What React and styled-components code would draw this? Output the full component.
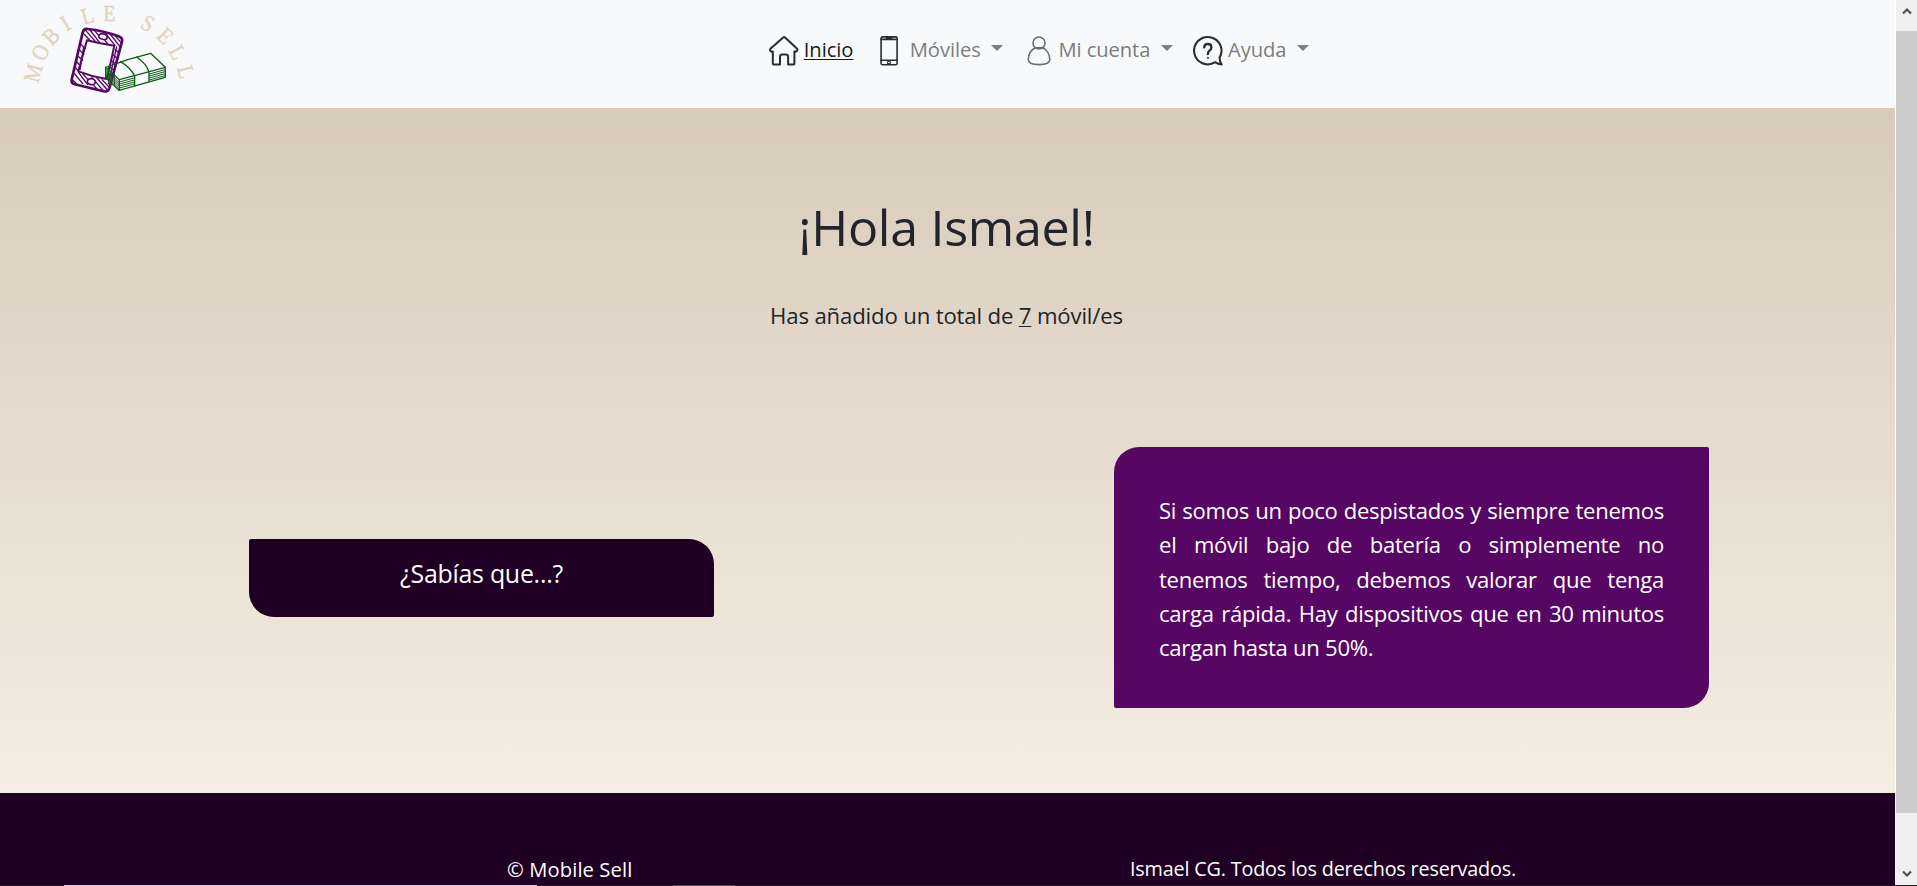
import React from "react";
import styled, { createGlobalStyle } from "styled-components";

const GlobalStyle = createGlobalStyle`
  *, *::before, *::after { box-sizing: border-box; }
  html, body { margin: 0; padding: 0; overflow: hidden; }
  body { font-family: "Open Sans", "Noto Sans", sans-serif; color: #212529; background: #fff; }
  h1, p { margin: 0; font-weight: 400; }
`;

const Screen = styled.div`
  display: flex;
  flex-direction: column;
  width: 1917px;
  height: 886px;
  overflow: hidden;
`;

const Viewport = styled.div`
  display: flex;
  flex: 0 0 885px;
`;

const Page = styled.div`
  display: flex;
  flex-direction: column;
  width: 1895px;
  height: 885px;
`;

const Header = styled.header`
  display: flex;
  flex: 0 0 108px;
  background: #f8f9fb;
`;

const LogoSvg = styled.svg`
  display: block;
  width: 220px;
  height: 108px;
  flex: none;
`;

const Nav = styled.nav`
  display: flex;
  align-items: flex-start;
  gap: 20.4px;
  margin-left: 549px;
  padding-top: 34px;
`;

const NavItem = styled.a`
  display: flex;
  align-items: center;
  height: 30px;
  font-size: 20.2px;
  line-height: 30px;
  letter-spacing: -0.08px;
  color: ${(p) => (p.$active ? "#191a1b" : "#7c7d7e")};
`;

const NavIcon = styled.svg`
  display: block;
  flex: none;
  width: 30px;
  height: 30px;
  margin: 3px ${(p) => p.$space || 4.8}px 0 0;
  overflow: visible;
  fill: none;
  stroke: ${(p) => p.$tone || "#2b2c2d"};
  stroke-width: ${(p) => p.$weight || 2};
  stroke-linejoin: round;
  stroke-linecap: round;
`;

const NavLabel = styled.span`
  text-decoration: ${(p) => (p.$active ? "underline" : "none")};
  text-decoration-thickness: 1px;
  text-underline-offset: 2px;
`;

const Caret = styled.span`
  width: 0;
  height: 0;
  margin: -3px 0 0 10.5px;
  border: 6px solid transparent;
  border-top-color: #7c7d7e;
  border-bottom: 0;
`;

const Main = styled.main`
  display: flex;
  flex-direction: column;
  align-items: center;
  flex: 0 0 685px;
  padding-top: 88px;
  background: linear-gradient(#d8cbba, #f5ede3);
`;

const Greeting = styled.h1`
  padding-right: 2px;
  font-size: 50.2px;
  line-height: 62px;
  letter-spacing: -0.32px;
`;

const Summary = styled.p`
  margin-top: 41px;
  padding-right: 2px;
  font-size: 22.2px;
  line-height: 34px;
  letter-spacing: -0.17px;
`;

const Count = styled.span`
  text-decoration: underline;
  text-decoration-thickness: 1px;
  text-underline-offset: 2px;
`;

const TipRow = styled.section`
  display: flex;
  align-items: center;
  justify-content: space-between;
  width: 100%;
  margin-top: 114px;
  padding: 0 186px 0 249px;
`;

const TipButton = styled.div`
  width: 465px;
  height: 78px;
  padding-top: 15px;
  border-radius: 2px 25px 2px 25px;
  background: #1f0024;
  color: #fff;
  font-size: 24.9px;
  line-height: 38px;
  letter-spacing: -0.25px;
  text-align: center;
`;

const TipCard = styled.p`
  width: 595px;
  height: 261px;
  padding: 46px 45px 0;
  border-radius: 25px 2px 25px 2px;
  background: #560663;
  color: #fff;
  font-size: 22.1px;
  line-height: 34.3px;
  letter-spacing: -0.28px;
  text-align: justify;
`;

const Footer = styled.footer`
  display: flex;
  flex: 1;
  padding: 61px 0 0 507px;
  background: #1f0024;
  color: #fff;
  line-height: 30px;
`;

const FooterText = styled.p`
  flex: 0 0 ${(p) => p.$width}px;
  font-size: ${(p) => p.$size}px;
  letter-spacing: ${(p) => p.$spacing}px;
  white-space: nowrap;
`;

const Scrollbar = styled.div`
  display: flex;
  flex-direction: column;
  width: 21px;
  margin-left: 1px;
  background: #f0f0f0;
`;

const ScrollArrow = styled.div`
  display: flex;
  align-items: flex-start;
  justify-content: center;
  height: ${(p) => p.$height}px;
  padding-top: ${(p) => p.$drop}px;
`;

const Thumb = styled.div`
  height: 782px;
  background: #cdcdcd;
`;

const Strip = styled.div`
  display: flex;
  height: 1px;
  background: #1d1b1d;
`;

const StripPart = styled.div`
  width: ${(p) => p.$width}px;
  background: ${(p) => p.$color};
`;

const letters = [
  ["M", 33.2, 73, -75],
  ["O", 40.4, 52.5, -61],
  ["B", 51, 36, -46],
  ["I", 65.5, 23.3, -31],
  ["L", 87.5, 15.8, -15],
  ["E", 109.5, 12.9, 0],
  ["S", 147.8, 23.3, 29],
  ["E", 165.2, 36, 46],
  ["L", 177.7, 52.5, 61],
  ["L", 186, 72, 76],
];

function Logo() {
  return (
    <LogoSvg viewBox="0 0 220 108">
      <g
        fill="#e2d3c2"
        stroke="#e2d3c2"
        strokeWidth=".45"
        fontFamily="Liberation Serif, serif"
        fontSize="23"
        textAnchor="middle"
      >
        {letters.map(([ch, x, y, r], i) => (
          <text key={i} transform={`translate(${x} ${y}) rotate(${r}) scale(.88 1)`} y="7.6">{ch}</text>
        ))}
      </g>
      <g transform="scale(.3333)" fill="none" strokeLinecap="round" strokeLinejoin="round">
        <g stroke="#560663">
          <path strokeWidth="8" d="M263 87Q251 85 248 98L215 239Q213 250 224 253L311 274Q324 277 328 265L366 125Q369 114 356 109Q310 92 263 87Z" />
          <path strokeWidth="6" d="M261 121Q303 132 343 137Q333 187 320 237Q276 230 235 214Z" />
          <path strokeWidth="4" d="M251 101L269 120M257 91L286 124M270 90L299 128M284 92L296 106M313 119L323 132M313 96L345 136M328 99L362 142M345 107L365 130M244 134L255 146M240 151L251 164M236 170L248 181M231 187L242 198M227 204L237 215M346 149L358 160M341 165L353 177M337 184L349 194M332 203L343 213M327 222L337 232M224 222L248 251M218 240L230 252M236 218L263 254M249 222L264 239M279 254L292 268M276 232L309 271M291 234L325 273M306 239L329 263" />
          <path strokeWidth="4" d="M251 140L240 209M350 141L325 251" />
          <ellipse cx="309" cy="110" rx="13" ry="8" strokeWidth="5" fill="#f8f9fb" transform="rotate(12 309 110)" />
          <ellipse cx="274" cy="245" rx="12" ry="9" strokeWidth="5" fill="#f8f9fb" transform="rotate(12 274 245)" />
        </g>
        <g stroke="#155b19" strokeWidth="4">
          <path d="M317 202Q384 176 452 160L496 202V232L357 271L317 233Z" />
          <path d="M318 203L358 239L496 202M358 239V270" />
          <path d="M362 185Q396 207 404 229V258M410 171Q440 192 447 216V245" />
          <path strokeWidth="3" d="M358 246L403 234M358 252L403 240M358 258L403 246M358 264L403 252M448 222L495 209M448 228L495 215M448 234L495 221M448 240L495 227" />
          <path strokeWidth="3" d="M318 209L356 246M318 215L356 252M318 221L356 258M318 227L356 264M326 201V239M334 208V247M343 218V256" />
        </g>
      </g>
    </LogoSvg>
  );
}

function HomeIcon() {
  return (
    <NavIcon viewBox="0 0 30 30">
      <path d="M14.5 1.2Q15.2.7 16 1.4L28.2 12.8Q29 14 27.8 15Q26.8 16 25.4 15.4V27Q25.4 28.6 24 28.6H19.1V21Q19.1 18.6 17 18.6H13Q11 18.6 11 21V28.6H5.2Q3.8 28.6 3.8 27V15.4Q2.4 16 1.4 15Q.4 14 1.4 12.8Z" />
    </NavIcon>
  );
}

function PhoneIcon() {
  return (
    <NavIcon viewBox="0 0 30 30" $weight={1.6} $space={6}>
      <rect x="7.1" y=".9" width="16" height="27.8" rx="1.4" />
      <path d="M7.1 3.4H23.1M7.1 24.2H23.1" />
      <path d="M12.5 2H17.8" strokeWidth="1.8" />
      <rect x="13.8" y="25.6" width="2.6" height="2" strokeWidth="1" />
    </NavIcon>
  );
}

function UserIcon() {
  return (
    <NavIcon viewBox="0 0 30 30" $weight={1.6} $tone="#6b6c6d">
      <circle cx="15" cy="7" r="6" />
      <path d="M11.2 11.7H18.8M11.2 11.7C6.8 14 4.3 19 4.3 23.5C4.3 26.6 8 28.6 15 28.6S25.8 26.6 25.8 23.5C25.8 19 23.2 14 18.8 11.7" />
    </NavIcon>
  );
}

function HelpIcon() {
  return (
    <NavIcon viewBox="0 0 30 30" $weight={2.1}>
      <path d="M22.2 26.2A13.7 13.7 0 1 1 26.5 21.8Q26.6 25.4 28.7 28.5Q25 28.4 22.2 26.2Z" />
      <path d="M11.2 11.6Q11.2 8 14.8 8Q18.4 8 18.4 11.3Q18.4 13.2 16.5 14.6Q14.8 15.9 14.8 18.2" strokeWidth="2.3" />
      <circle cx="14.8" cy="21.9" r=".6" strokeWidth="1" />
    </NavIcon>
  );
}

const navEntries = [
  { label: "Inicio", Icon: HomeIcon, active: true },
  { label: "Móviles", Icon: PhoneIcon },
  { label: "Mi cuenta", Icon: UserIcon },
  { label: "Ayuda", Icon: HelpIcon },
];

export default function App() {
  return (
    <>
      <GlobalStyle />
      <Screen>
        <Viewport>
          <Page>
            <Header>
              <Logo />
              <Nav>
                {navEntries.map(({ label, Icon, active }) => (
                  <NavItem key={label} $active={active}>
                    <Icon />
                    <NavLabel $active={active}>{label}</NavLabel>
                    {!active && <Caret />}
                  </NavItem>
                ))}
              </Nav>
            </Header>
            <Main>
              <Greeting>¡Hola Ismael!</Greeting>
              <Summary>
                Has añadido un total de <Count>7</Count> móvil/es
              </Summary>
              <TipRow>
                <TipButton>¿Sabías que...?</TipButton>
                <TipCard>
                  Si somos un poco despistados y siempre tenemos el móvil bajo de batería o simplemente no
                  tenemos tiempo, debemos valorar que tenga carga rápida. Hay dispositivos que en 30 minutos
                  cargan hasta un 50%.
                </TipCard>
              </TipRow>
            </Main>
            <Footer>
              <FooterText $width={623} $size={20.2} $spacing={0.1}>© Mobile Sell</FooterText>
              <FooterText $width={400} $size={19.8} $spacing={-0.18}>
                Ismael CG. Todos los derechos reservados.
              </FooterText>
            </Footer>
          </Page>
          <Scrollbar>
            <ScrollArrow $height={31} $drop={7}>
              <svg width="10" height="8" viewBox="0 0 10 8">
                <path d="M1 6.5L5 2.5L9 6.5" fill="none" stroke="#505050" strokeWidth="2.2" />
              </svg>
            </ScrollArrow>
            <Thumb />
            <ScrollArrow $height={72} $drop={57}>
              <svg width="10" height="8" viewBox="0 0 10 8">
                <path d="M1 1.5L5 5.5L9 1.5" fill="none" stroke="#505050" strokeWidth="2.2" />
              </svg>
            </ScrollArrow>
          </Scrollbar>
        </Viewport>
        <Strip>
          <StripPart $width={64} $color="#1d1b1d" />
          <StripPart $width={473} $color="#d6cdd7" />
          <StripPart $width={136} $color="#1d1b1d" />
          <StripPart $width={62} $color="#4a474a" />
        </Strip>
      </Screen>
    </>
  );
}
